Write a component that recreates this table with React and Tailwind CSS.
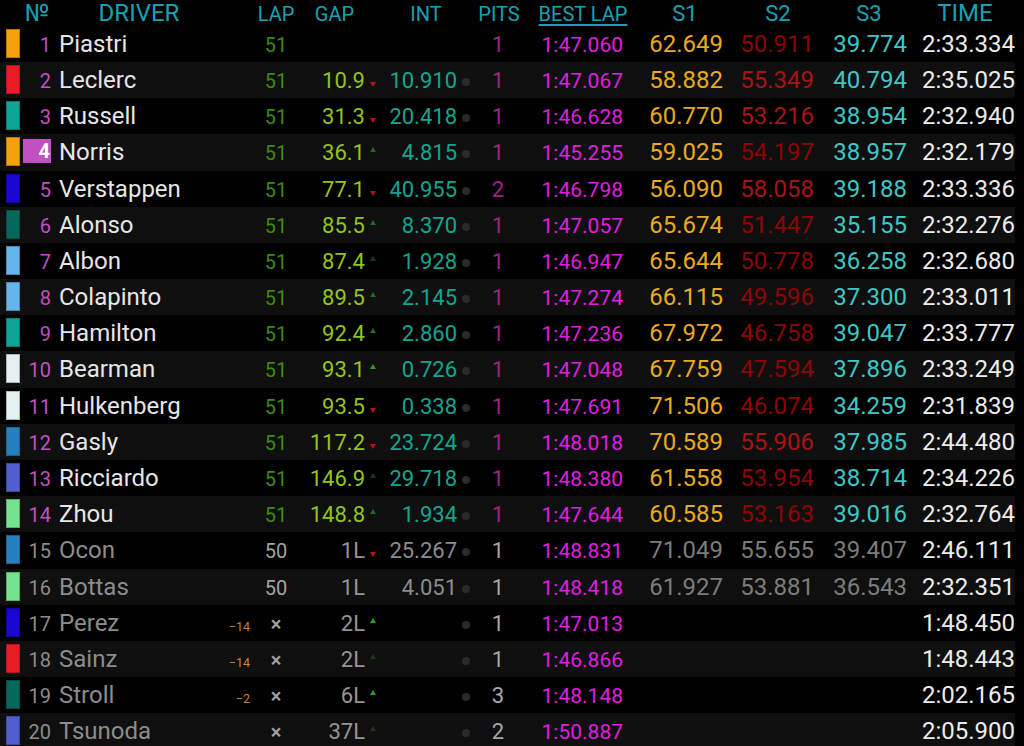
import React from 'react'

const BAR = {
  mcl: '#f5a10d',
  fer: '#ea1c26',
  mer: '#0fa596',
  rbr: '#1a06d2',
  ast: '#03695c',
  wil: '#63b5ea',
  haas: '#e4f1f0',
  alp: '#2480bf',
  rb: '#4f5fcf',
  sau: '#74e38d',
}

const ARROW = { d: '#b51414', u: '#2f9b2f', m: '#1f6e1f', l: '#163d16' }

const drivers = [
  { pos: 1, name: 'Piastri', team: 'mcl', lap: '51', gap: '', arrow: '', int: '', pits: 1, best: '1:47.060', s1: '62.649', s2: '50.911', s3: '39.774', time: '2:33.334' },
  { pos: 2, name: 'Leclerc', team: 'fer', lap: '51', gap: '10.9', arrow: 'd', int: '10.910', pits: 1, best: '1:47.067', s1: '58.882', s2: '55.349', hot: true, s3: '40.794', time: '2:35.025' },
  { pos: 3, name: 'Russell', team: 'mer', lap: '51', gap: '31.3', arrow: 'd', int: '20.418', pits: 1, best: '1:46.628', s1: '60.770', s2: '53.216', hot: true, s3: '38.954', time: '2:32.940' },
  { pos: 4, name: 'Norris', team: 'mcl', lap: '51', gap: '36.1', arrow: 'm', int: '4.815', pits: 1, best: '1:45.255', s1: '59.025', s2: '54.197', s3: '38.957', time: '2:32.179', fastest: true },
  { pos: 5, name: 'Verstappen', team: 'rbr', lap: '51', gap: '77.1', arrow: 'd', int: '40.955', pits: 2, best: '1:46.798', s1: '56.090', s2: '58.058', hot: true, s3: '39.188', time: '2:33.336' },
  { pos: 6, name: 'Alonso', team: 'ast', lap: '51', gap: '85.5', arrow: 'm', int: '8.370', pits: 1, best: '1:47.057', s1: '65.674', s2: '51.447', s3: '35.155', time: '2:32.276' },
  { pos: 7, name: 'Albon', team: 'wil', lap: '51', gap: '87.4', arrow: 'l', int: '1.928', pits: 1, best: '1:46.947', s1: '65.644', s2: '50.778', s3: '36.258', time: '2:32.680' },
  { pos: 8, name: 'Colapinto', team: 'wil', lap: '51', gap: '89.5', arrow: 'm', int: '2.145', pits: 1, best: '1:47.274', s1: '66.115', s2: '49.596', s3: '37.300', time: '2:33.011' },
  { pos: 9, name: 'Hamilton', team: 'mer', lap: '51', gap: '92.4', arrow: 'm', int: '2.860', pits: 1, best: '1:47.236', s1: '67.972', s2: '46.758', s3: '39.047', time: '2:33.777' },
  { pos: 10, name: 'Bearman', team: 'haas', lap: '51', gap: '93.1', arrow: 'u', int: '0.726', pits: 1, best: '1:47.048', s1: '67.759', s2: '47.594', s3: '37.896', time: '2:33.249' },
  { pos: 11, name: 'Hulkenberg', team: 'haas', lap: '51', gap: '93.5', arrow: 'd', int: '0.338', pits: 1, best: '1:47.691', s1: '71.506', s2: '46.074', s3: '34.259', time: '2:31.839' },
  { pos: 12, name: 'Gasly', team: 'alp', lap: '51', gap: '117.2', arrow: 'd', int: '23.724', pits: 1, best: '1:48.018', s1: '70.589', s2: '55.906', hot: true, s3: '37.985', time: '2:44.480' },
  { pos: 13, name: 'Ricciardo', team: 'rb', lap: '51', gap: '146.9', arrow: 'l', int: '29.718', pits: 1, best: '1:48.380', s1: '61.558', s2: '53.954', s3: '38.714', time: '2:34.226' },
  { pos: 14, name: 'Zhou', team: 'sau', lap: '51', gap: '148.8', arrow: 'm', int: '1.934', pits: 1, best: '1:47.644', s1: '60.585', s2: '53.163', s3: '39.016', time: '2:32.764' },
  { pos: 15, name: 'Ocon', team: 'alp', lap: '50', gap: '1L', arrow: 'd', int: '25.267', pits: 1, best: '1:48.831', s1: '71.049', s2: '55.655', s3: '39.407', time: '2:46.111' },
  { pos: 16, name: 'Bottas', team: 'sau', lap: '50', gap: '1L', arrow: '', int: '4.051', pits: 1, best: '1:48.418', s1: '61.927', s2: '53.881', s3: '36.543', time: '2:32.351' },
  { pos: 17, name: 'Perez', team: 'rbr', lap: '×', adj: '−14', gap: '2L', arrow: 'u', int: '', pits: 1, best: '1:47.013', s1: '', s2: '', s3: '', time: '1:48.450' },
  { pos: 18, name: 'Sainz', team: 'fer', lap: '×', adj: '−14', gap: '2L', arrow: 'l', int: '', pits: 1, best: '1:46.866', s1: '', s2: '', s3: '', time: '1:48.443' },
  { pos: 19, name: 'Stroll', team: 'ast', lap: '×', adj: '−2', gap: '6L', arrow: 'u', int: '', pits: 3, best: '1:48.148', s1: '', s2: '', s3: '', time: '2:02.165' },
  { pos: 20, name: 'Tsunoda', team: 'rb', lap: '×', gap: '37L', arrow: 'l', int: '', pits: 2, best: '1:50.887', s1: '', s2: '', s3: '', time: '2:05.900' },
]

const Arrow = ({ type }) => {
  if (!type) return null
  const down = type === 'd'
  return (
    <svg width="6" height="5" viewBox="0 0 6 5" className={down ? 'ml-[5px] mt-[20px]' : 'ml-[5px] mt-[13px]'}>
      <path d={down ? 'M0 0H6L3 5Z' : 'M3 0L6 5H0Z'} fill={ARROW[type]} />
    </svg>
  )
}

const Header = () => (
  <div className="flex items-baseline h-[25.8px] pt-[1px] leading-none text-[#1aa0b4] whitespace-nowrap">
    <div className="ml-[22px] w-[30px] text-center text-[24px]">№</div>
    <div className="ml-[8px] w-[158px] text-center text-[24px]">DRIVER</div>
    <div className="ml-[33px] w-[50px] text-center text-[20px]">LAP</div>
    <div className="w-[67px] text-center text-[20px]">GAP</div>
    <div className="ml-[22px] w-[72px] text-center text-[20px]">INT</div>
    <div className="w-[74px] text-center text-[20px]">PITS</div>
    <div className="w-[94px] text-center text-[20px] underline underline-offset-[3px] decoration-[1.5px]">BEST LAP</div>
    <div className="w-[110px] text-center text-[22px]">S1</div>
    <div className="w-[76px] text-center text-[22px]">S2</div>
    <div className="w-[106px] text-center text-[22px]">S3</div>
    <div className="w-[86px] text-center text-[24px]">TIME</div>
  </div>
)

const Row = ({ d, i }) => {
  const dim = d.lap !== '51'
  return (
    <div className={`flex items-baseline h-[36.2px] pl-[6px] leading-[36.2px] whitespace-nowrap ${i % 2 ? 'bg-[#0f0f0f]' : 'bg-black'}`}>
      <div className="self-start w-[14px] h-[29px] mt-[3px] shrink-0 border border-black/25" style={{ background: BAR[d.team] }} />

      {d.fastest ? (
        <div className="self-start w-[31px] shrink-0 flex justify-end">
          <div className="mt-[5px] h-[24px] w-[28px] bg-[#c24fc4] text-right pr-[1px] text-[20px] leading-[24px] font-bold text-white">{d.pos}</div>
        </div>
      ) : (
        <div className={`w-[31px] shrink-0 text-right text-[20px] ${dim ? 'text-[#8c8c8c]' : 'text-[#c24fc4]'}`}>{d.pos}</div>
      )}

      <div className={`ml-[8px] w-[160px] shrink-0 text-[24px] ${dim ? 'text-[#8c8c8c]' : 'text-[#e6e6e6]'}`}>{d.name}</div>

      <div className="w-[32px] shrink-0 text-right pr-[1px] text-[12.5px] text-[#c6823d]">{d.adj}</div>

      <div className={`w-[50px] shrink-0 text-center text-[20px] ${dim ? 'text-[#a3a3a3]' : 'text-[#3c8b0e]'}`}>
        {d.lap === '×' ? <span className="font-semibold">×</span> : d.lap}
      </div>

      <div className={`w-[64px] shrink-0 text-right text-[22px] ${dim ? 'text-[#959595]' : 'text-[#93c418]'}`}>{d.gap}</div>
      <div className="self-start w-[14px] shrink-0 flex">
        <Arrow type={d.arrow} />
      </div>

      <div className={`w-[78px] shrink-0 text-right text-[22px] ${dim ? 'text-[#8c8c8c]' : 'text-[#12a592]'}`}>{d.int}</div>
      <div className="self-start w-[21px] shrink-0 flex">
        {d.pos > 1 && <div className="ml-[5px] mt-[16px] w-[8px] h-[8px] rounded-full bg-[#2a2a2a]" />}
      </div>

      <div className={`w-[40px] shrink-0 text-center text-[22px] ${dim ? 'text-[#a8a8a8]' : 'text-[#a1208f]'}`}>{d.pits}</div>
      <div className="w-[105px] shrink-0 text-right text-[21px] text-[#e01ee0]">{d.best}</div>
      <div className={`w-[100px] shrink-0 text-right text-[24px] ${dim ? 'text-[#7c7c7c]' : 'text-[#e8aa1f]'}`}>{d.s1}</div>
      <div className={`w-[91px] shrink-0 text-right text-[24px] ${dim ? 'text-[#7c7c7c]' : d.hot ? 'text-[#a81414]' : 'text-[#8c0606]'}`}>{d.s2}</div>
      <div className={`w-[93px] shrink-0 text-right text-[24px] ${dim ? 'text-[#7c7c7c]' : 'text-[#3fc6c6]'}`}>{d.s3}</div>
      <div className="w-[108px] shrink-0 text-right text-[24px] text-[#ececec]">{d.time}</div>
    </div>
  )
}

export default function App() {
  return (
    <div className="w-[1024px] h-[746px] overflow-hidden bg-black font-['Roboto',sans-serif] text-[21px]">
      <div className="w-[1015px]">
        <Header />
        {drivers.map((d, i) => (
          <Row key={d.pos} d={d} i={i} />
        ))}
      </div>
    </div>
  )
}
